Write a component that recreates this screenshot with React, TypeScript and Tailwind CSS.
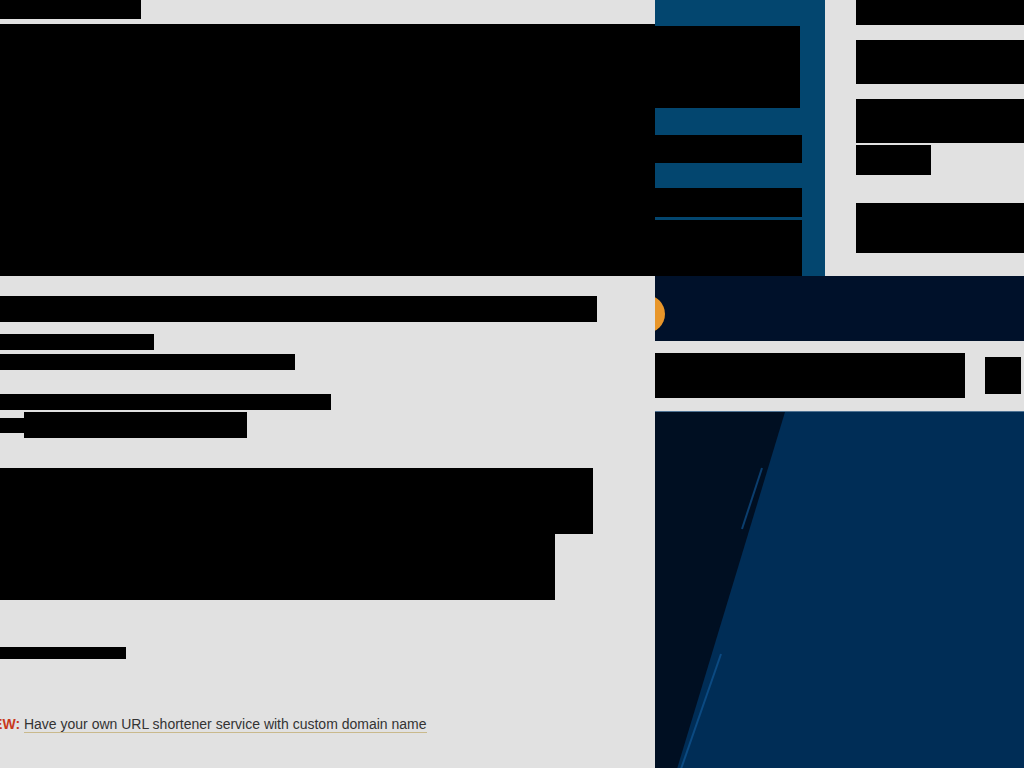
import React from 'react';

const Block: React.FC<{ className?: string }> = ({ className = '' }) => (
  <div className={`bg-black shrink-0 ${className}`} />
);

const App: React.FC = () => {
  return (
    <div className="w-[1024px] h-[768px] overflow-hidden bg-[#e1e1e1] flex flex-col font-['Liberation_Sans',Arial,sans-serif]">
      {/* top row */}
      <div className="flex h-[276px] shrink-0">
        <div className="w-[655px] flex flex-col">
          <Block className="w-[141px] h-[19px]" />
          <Block className="mt-[5px] w-full flex-1" />
        </div>

        <div className="w-[170px] bg-[#03466f] flex flex-col pt-[26px]">
          <Block className="w-[145px] h-[82px]" />
          <Block className="mt-[27px] w-[147px] h-[28px]" />
          <Block className="mt-[25px] w-[147px] h-[29px]" />
          <Block className="mt-[3px] w-[147px] flex-1" />
        </div>

        <div className="flex-1 flex flex-col pl-[31px]">
          <Block className="w-full h-[25px]" />
          <Block className="mt-[15px] w-full h-[44px]" />
          <Block className="mt-[15px] w-full h-[44px]" />
          <Block className="mt-[2px] w-[75px] h-[30px]" />
          <Block className="mt-[28px] w-full h-[50px]" />
        </div>
      </div>

      {/* bottom row */}
      <div className="flex flex-1">
        <div className="w-[655px] flex flex-col pt-[20px]">
          <Block className="w-[597px] h-[26px]" />
          <Block className="mt-[12px] w-[154px] h-[16px]" />
          <Block className="mt-[4px] w-[295px] h-[16px]" />
          <Block className="mt-[24px] w-[331px] h-[16px]" />
          <div className="mt-[2px] flex items-center">
            <Block className="w-[24px] h-[15px]" />
            <Block className="w-[223px] h-[26px]" />
          </div>
          <Block className="mt-[30px] w-[593px] h-[66px]" />
          <Block className="w-[555px] h-[66px]" />
          <Block className="mt-[47px] w-[126px] h-[12px]" />
          <p className="mt-[55px] ml-[-17px] text-[14px] leading-[20px] whitespace-nowrap">
            <span className="font-bold text-[#c8381b]">NEW:</span>{' '}
            <a className="text-[#333333] border-b border-[#c9b98c]">
              Have your own URL shortener service with custom domain name
            </a>
          </p>
        </div>

        <div className="flex-1 flex flex-col">
          <div className="relative h-[65px] bg-[#00112a] overflow-hidden">
            <div className="absolute left-[-28px] top-[19px] w-[38px] h-[38px] rounded-full bg-[#e8962a]" />
          </div>

          <div className="h-[70px] flex items-start">
            <Block className="mt-[12px] w-[310px] h-[45px]" />
            <Block className="mt-[16px] ml-[20px] w-[36px] h-[37px]" />
          </div>

          <div className="flex-1 border-t border-[#4f7394]">
            <svg width="369" height="357" viewBox="0 0 369 357" className="block">
              <rect width="369" height="357" fill="#000f22" />
              <polygon points="130,0 369,0 369,357 22,357" fill="#002d56" />
              <line x1="107" y1="56" x2="87" y2="117" stroke="#0b3e6e" strokeWidth="2" />
              <line x1="66" y1="242" x2="26" y2="357" stroke="#0b4a82" strokeWidth="2" />
            </svg>
          </div>
        </div>
      </div>
    </div>
  );
};

export default App;
